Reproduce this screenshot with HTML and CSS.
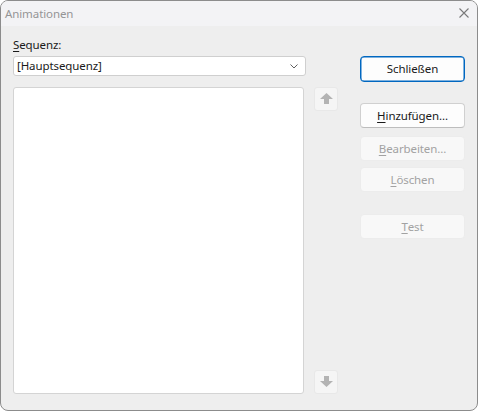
FILE: index.html
```html
<!DOCTYPE html>
<html lang="de">
<head>
<meta charset="utf-8">
<title>Animationen</title>
<link rel="stylesheet" href="styles.css">
</head>
<body>
<div class="window">
  <div class="titlebar">
    <span class="title">Animationen</span>
    <svg class="close" width="10" height="10" viewBox="0 0 10 10"><path d="M0.5 0.5 L9.5 9.5 M9.5 0.5 L0.5 9.5" stroke="#7a7a7a" stroke-width="1.1" fill="none"/></svg>
  </div>
  <div class="main">
    <div class="left">
      <div class="label"><u>S</u>equenz:</div>
      <div class="select">
        <span>[Hauptsequenz]</span>
        <svg class="chev" width="8" height="5" viewBox="0 0 8 5"><path d="M0.5 0.5 L4 4 L7.5 0.5" stroke="#606060" stroke-width="1" fill="none"/></svg>
      </div>
      <div class="list"></div>
    </div>
    <div class="mid">
      <div class="arrowbtn">
        <svg width="13" height="12" viewBox="0 0 13 12"><polygon points="6.5,0 13,6 9,6 9,11 4,11 4,6 0,6" fill="#b3b3b3"/></svg>
      </div>
      <div class="arrowbtn">
        <svg width="13" height="12" viewBox="0 0 13 12"><polygon points="4,0 9,0 9,5 13,5 6.5,11 0,5 4,5" fill="#b3b3b3"/></svg>
      </div>
    </div>
    <div class="right">
      <div class="btn default">Schließen</div>
      <div class="btn add"><u>H</u>inzufügen...</div>
      <div class="btn disabled edit"><u>B</u>earbeiten...</div>
      <div class="btn disabled del"><u>L</u>öschen</div>
      <div class="btn disabled test"><u>T</u>est</div>
    </div>
  </div>
</div>
</body>
</html>
```
FILE: styles.css
```css
html, body {
  margin: 0;
  padding: 0;
  background: #ffffff;
}
body {
  font-family: "Noto Sans", "Liberation Sans", sans-serif;
  font-size: 11.5px;
  letter-spacing: -0.1px;
  color: #1a1a1a;
}
.window {
  width: 478px;
  height: 411px;
  box-sizing: border-box;
  border: 1px solid #8c8c8c;
  border-radius: 8px;
  background: #eeeeee;
  overflow: hidden;
}
.titlebar {
  height: 25px;
  background: #f3f3f5;
  display: flex;
  align-items: center;
  justify-content: space-between;
  padding: 0 8px 0 4px;
}
.title {
  color: #959595;
}
.close {
  margin-top: -1px;
}
.main {
  display: flex;
  padding: 11px 12px 0 12px;
}
.left {
  width: 293px;
  display: flex;
  flex-direction: column;
}
.label {
  height: 16px;
  line-height: 16px;
  margin-bottom: 3px;
}
.label u, .btn u {
  text-decoration-thickness: 1px;
  text-underline-offset: 2px;
}
.select {
  height: 20px;
  box-sizing: border-box;
  border: 1px solid #cfcfcf;
  border-radius: 3px;
  background: #ffffff;
  display: flex;
  align-items: center;
  justify-content: space-between;
  padding: 0 7px 0 3px;
}
.select span {
  line-height: 16px;
}
.chev {
  margin-top: 1px;
}
.list {
  margin-top: 11px;
  width: 291px;
  height: 307px;
  box-sizing: border-box;
  border: 1px solid #d4d4d4;
  border-radius: 3px;
  background: #ffffff;
}
.mid {
  margin-left: 8px;
  width: 24px;
  padding-top: 50px;
  height: 307px;
  display: flex;
  flex-direction: column;
  justify-content: space-between;
}
.arrowbtn {
  width: 24px;
  height: 24px;
  box-sizing: border-box;
  border: 1px solid #e8e8e8;
  border-radius: 3px;
  background: #f5f5f5;
  display: flex;
  align-items: center;
  justify-content: center;
}
.right {
  margin-left: 22px;
  width: 105px;
  padding-top: 19px;
  display: flex;
  flex-direction: column;
}
.btn {
  height: 25px;
  box-sizing: border-box;
  border: 1px solid #d0d0d0;
  border-bottom-color: #bdbdbd;
  border-radius: 4px;
  background: #fdfdfd;
  display: flex;
  align-items: center;
  justify-content: center;
  line-height: 16px;
}
.btn.default {
  height: 26px;
  border: 1px solid #0067c0;
  box-shadow: inset 0 0 0 0.5px #0067c0;
}
.btn.add {
  margin-top: 21px;
}
.btn.disabled {
  background: #f8f8f8;
  border-color: #ececec;
  color: #a2a2a2;
}
.btn.edit {
  margin-top: 8px;
}
.btn.del {
  margin-top: 6px;
}
.btn.test {
  margin-top: 22px;
}
```
